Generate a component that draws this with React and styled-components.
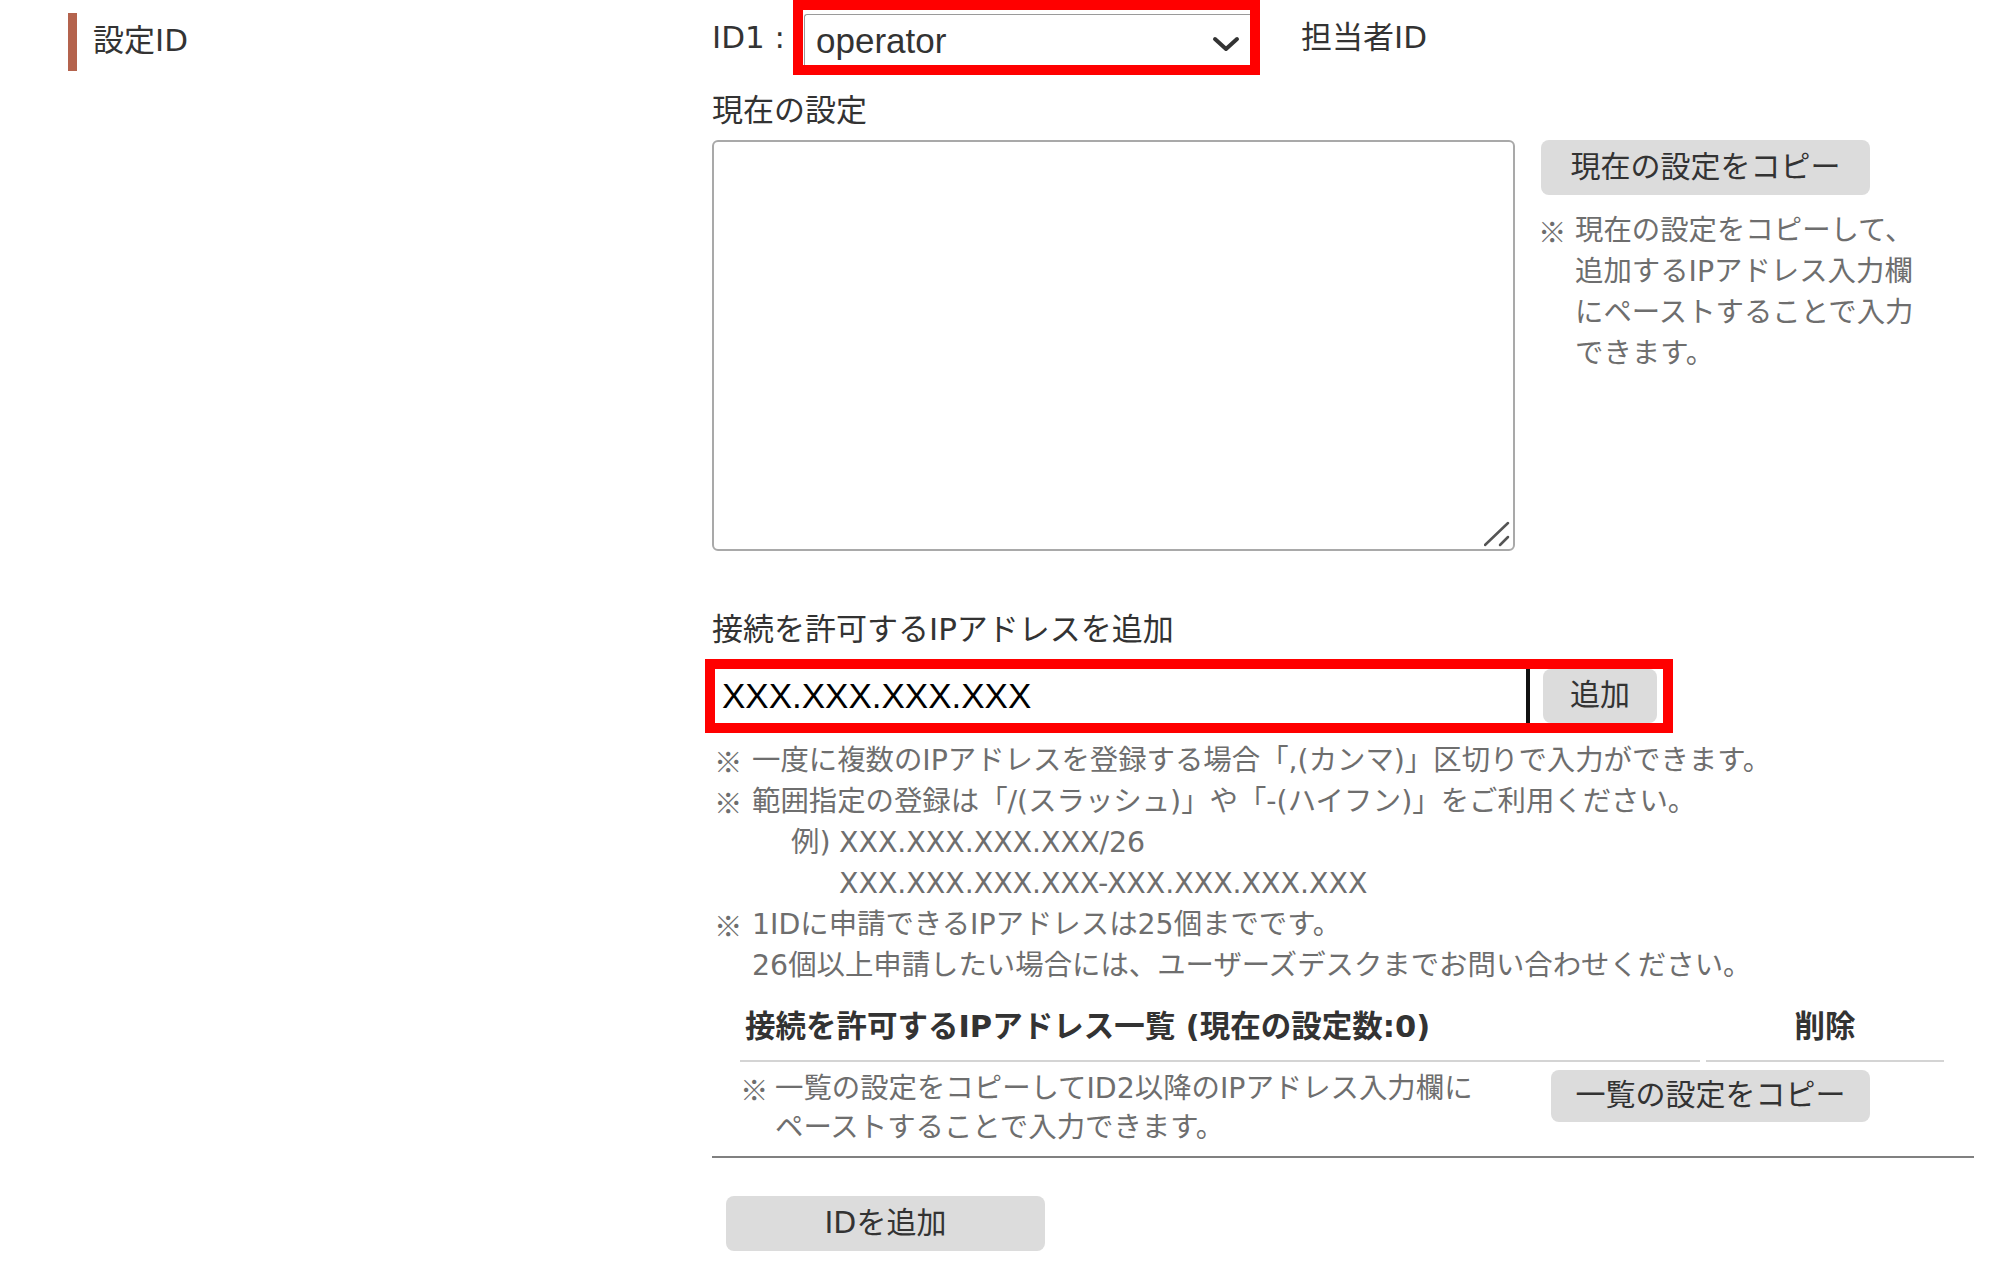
import React from "react";
import styled, { createGlobalStyle } from "styled-components";

const GlobalStyle = createGlobalStyle`
  body {
    margin: 0;
    background: #ffffff;
    font-family: "DejaVu Sans", "Noto Sans CJK JP", sans-serif;
    color: #333333;
  }
`;

const Page = styled.div`
  display: grid;
  grid-template-columns: 644px 1262px;
  padding-left: 68px;
`;

const SectionTitle = styled.h2`
  align-self: start;
  box-sizing: border-box;
  display: flex;
  align-items: center;
  height: 58px;
  margin: 13px 0 0;
  padding: 0 0 9px 16px;
  border-left: 9px solid #b4634d;
  font-size: 31px;
  font-weight: normal;
  color: #333333;
`;

const Content = styled.div`
  display: flex;
  flex-direction: column;
  align-items: flex-start;
`;

const IdRow = styled.div`
  display: flex;
  align-items: center;
  height: 75px;
`;

const Label = styled.div`
  width: ${props => props.width || "auto"};
  margin-top: ${props => props.top || "0"};
  margin-left: ${props => props.left || "0"};
  font-size: 31px;
  line-height: 41px;
  color: #333333;
  white-space: nowrap;
`;

const Highlight = styled.div`
  display: flex;
  align-items: ${props => props.align || "flex-start"};
  margin-top: ${props => props.top || "0"};
  margin-left: ${props => props.left || "0"};
  padding: ${props => props.pad || "0"};
  border: 10px solid #ff0000;
  background: #ffffff;
`;

const SelectBox = styled.div`
  position: relative;
  width: 446px;
  height: 51px;
`;

const Select = styled.select`
  appearance: none;
  box-sizing: border-box;
  width: 100%;
  height: 100%;
  padding: 0 0 0 11px;
  border-style: solid;
  border-color: #9a9a9a;
  border-width: 1px 0 0 1px;
  border-radius: 3px 0 0 0;
  background: #ffffff;
  font-family: "Liberation Sans", sans-serif;
  font-size: 35px;
  color: #333333;
  outline: none;
`;

const Chevron = styled.svg`
  position: absolute;
  right: 10px;
  top: 21px;
  pointer-events: none;
`;

const SettingRow = styled.div`
  display: flex;
  align-items: flex-start;
  gap: 26px;
  margin-top: 9px;
`;

const TextareaBox = styled.div`
  position: relative;
  width: 803px;
  height: 411px;
`;

const TextArea = styled.textarea`
  box-sizing: border-box;
  width: 100%;
  height: 100%;
  border: 2px solid #a9a9a9;
  border-radius: 6px;
  resize: none;
  outline: none;
`;

const ResizeHandle = styled.svg`
  position: absolute;
  right: 5px;
  bottom: 4px;
  pointer-events: none;
`;

const SideColumn = styled.div`
  display: flex;
  flex-direction: column;
  align-items: flex-start;
`;

const GrayButton = styled.button`
  box-sizing: border-box;
  width: ${props => props.w};
  height: ${props => props.h};
  margin: ${props => props.m || "0"};
  padding: 0 0 8px;
  border: none;
  border-radius: 8px;
  background: #dcdcdc;
  font-family: "DejaVu Sans", "Noto Sans CJK JP", sans-serif;
  font-size: 30px;
  color: #333333;
  white-space: nowrap;
`;

const Note = styled.div`
  display: flex;
  margin: ${props => props.m || "0"};
  font-size: 28.4px;
  line-height: ${props => props.lh || "41px"};
  color: #6e6e6e;
  white-space: nowrap;
`;

const Mark = styled.span`
  flex: none;
  width: ${props => props.w || "38px"};
  font-family: "Noto Sans CJK JP", sans-serif;
`;

const NoteList = styled.div`
  margin-top: 7px;
  padding-left: 2px;
`;

const ExampleGrid = styled.div`
  display: grid;
  grid-template-columns: 48px auto;
  margin-left: 39px;
`;

const AddressInput = styled.input`
  box-sizing: border-box;
  width: 814px;
  height: 54px;
  padding: 0 0 0 6px;
  border: none;
  border-right: 4px solid #111111;
  font-family: "Liberation Sans", sans-serif;
  font-size: 35px;
  color: #000000;
  outline: none;
`;

const TableArea = styled.div`
  align-self: stretch;
  margin-top: -2px;
  padding: 0 30px 0 28px;
  border-bottom: 2px solid #808080;
`;

const HeaderRow = styled.div`
  display: grid;
  grid-template-columns: 960px 238px;
  column-gap: 6px;
`;

const HeaderCell = styled.div`
  padding: 22px 0 13px ${props => (props.center ? "0" : "5px")};
  border-bottom: 2px solid #d4d4d4;
  text-align: ${props => (props.center ? "center" : "left")};
  font-size: 30.5px;
  font-weight: 700;
  line-height: 41px;
  color: #333333;
  white-space: nowrap;
`;

const BodyRow = styled.div`
  display: flex;
  justify-content: space-between;
  align-items: flex-start;
  padding: 7px 74px 9px 0;
`;

const App = () => {
  return (
    <>
      <GlobalStyle />
      <Page>
        <SectionTitle>設定ID</SectionTitle>
        <Content>
          <IdRow>
            <Label width="81px">ID1 :</Label>
            <Highlight pad="4px 0 0 1px">
              <SelectBox>
                <Select defaultValue="operator">
                  <option value="operator">operator</option>
                </Select>
                <Chevron width="28" height="18" viewBox="0 0 28 18">
                  <polyline points="3,4 14,14 25,4" fill="none" stroke="#333" strokeWidth="4" strokeLinecap="round" strokeLinejoin="round" />
                </Chevron>
              </SelectBox>
            </Highlight>
            <Label left="41px">担当者ID</Label>
          </IdRow>

          <Label top="15px">現在の設定</Label>
          <SettingRow>
            <TextareaBox>
              <TextArea />
              <ResizeHandle width="26" height="26" viewBox="0 0 26 26">
                <line x1="1" y1="24" x2="24" y2="2" stroke="#555" strokeWidth="2.5" strokeLinecap="round" />
                <line x1="16" y1="24" x2="24" y2="16" stroke="#555" strokeWidth="2.5" strokeLinecap="round" />
              </ResizeHandle>
            </TextareaBox>
            <SideColumn>
              <GrayButton w="329px" h="55px">現在の設定をコピー</GrayButton>
              <Note m="15px 0 0 -3px">
                <Mark w="37px">※</Mark>
                <span>
                  現在の設定をコピーして、<br />
                  追加するIPアドレス入力欄<br />
                  にペーストすることで入力<br />
                  できます。
                </span>
              </Note>
            </SideColumn>
          </SettingRow>

          <Label top="58px">接続を許可するIPアドレスを追加</Label>
          <Highlight top="9px" left="-7px" pad="0 6px 0 1px" align="center">
            <AddressInput defaultValue="XXX.XXX.XXX.XXX" />
            <GrayButton w="114px" h="54px" m="0 0 0 13px">追加</GrayButton>
          </Highlight>

          <NoteList>
            <Note>
              <Mark>※</Mark>
              <span>一度に複数のIPアドレスを登録する場合「,(カンマ)」区切りで入力ができます。</span>
            </Note>
            <Note>
              <Mark>※</Mark>
              <div>
                範囲指定の登録は「/(スラッシュ)」や「-(ハイフン)」をご利用ください。
                <ExampleGrid>
                  <span>例)</span>
                  <span>XXX.XXX.XXX.XXX/26</span>
                  <span />
                  <span>XXX.XXX.XXX.XXX-XXX.XXX.XXX.XXX</span>
                </ExampleGrid>
              </div>
            </Note>
            <Note>
              <Mark>※</Mark>
              <span>
                1IDに申請できるIPアドレスは25個までです。<br />
                26個以上申請したい場合には、ユーザーズデスクまでお問い合わせください。
              </span>
            </Note>
          </NoteList>

          <TableArea>
            <HeaderRow>
              <HeaderCell>接続を許可するIPアドレス一覧 (現在の設定数:0)</HeaderCell>
              <HeaderCell center>削除</HeaderCell>
            </HeaderRow>
            <BodyRow>
              <Note lh="39px">
                <Mark w="35px">※</Mark>
                <span>
                  一覧の設定をコピーしてID2以降のIPアドレス入力欄に<br />
                  ペーストすることで入力できます。
                </span>
              </Note>
              <GrayButton w="319px" h="52px" m="1px 0 0 0">一覧の設定をコピー</GrayButton>
            </BodyRow>
          </TableArea>

          <GrayButton w="319px" h="55px" m="38px 0 0 14px">IDを追加</GrayButton>
        </Content>
      </Page>
    </>
  );
};

export default App;
